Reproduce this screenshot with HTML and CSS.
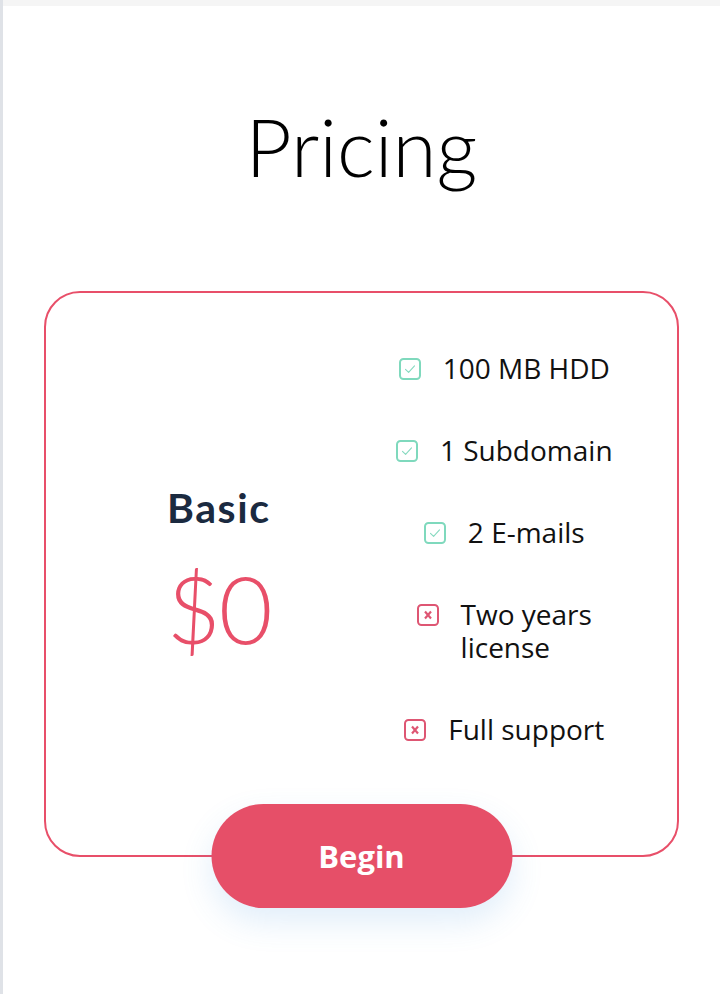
FILE: index.html
```html
<!DOCTYPE html>
<html lang="en">
<head>
<meta charset="utf-8">
<title>Pricing</title>
<link rel="stylesheet" href="styles.css">
</head>
<body>
<div class="topbar"></div>
<main class="pricing">
  <h1 class="title">Pricing</h1>
  <section class="card">
    <div class="plan">
      <h2 class="plan-name">Basic</h2>
      <div class="plan-price">$0</div>
    </div>
    <ul class="features">
      <li class="feature">
        <svg class="icon" viewBox="0 0 22 22" width="22" height="22"><rect class="box ok" x="1" y="1" width="20" height="20" rx="3.5"/><path class="tick" d="M6.5 11.3 L9.6 14.3 L15.5 7.8"/></svg>
        <span class="label">100 MB HDD</span>
      </li>
      <li class="feature">
        <svg class="icon" viewBox="0 0 22 22" width="22" height="22"><rect class="box ok" x="1" y="1" width="20" height="20" rx="3.5"/><path class="tick" d="M6.5 11.3 L9.6 14.3 L15.5 7.8"/></svg>
        <span class="label">1 Subdomain</span>
      </li>
      <li class="feature">
        <svg class="icon" viewBox="0 0 22 22" width="22" height="22"><rect class="box ok" x="1" y="1" width="20" height="20" rx="3.5"/><path class="tick" d="M6.5 11.3 L9.6 14.3 L15.5 7.8"/></svg>
        <span class="label">2 E-mails</span>
      </li>
      <li class="feature">
        <svg class="icon" viewBox="0 0 22 22" width="22" height="22"><rect class="box no" x="1" y="1" width="20" height="20" rx="3.5"/><path class="cross" d="M8 7.6 L14 14.4 M14 7.6 L8 14.4"/></svg>
        <span class="label">Two years<br>license</span>
      </li>
      <li class="feature">
        <svg class="icon" viewBox="0 0 22 22" width="22" height="22"><rect class="box no" x="1" y="1" width="20" height="20" rx="3.5"/><path class="cross" d="M8 7.6 L14 14.4 M14 7.6 L8 14.4"/></svg>
        <span class="label">Full support</span>
      </li>
    </ul>
    <button class="begin" type="button">Begin</button>
  </section>
</main>
</body>
</html>
```
FILE: styles.css
```css
html, body {
  margin: 0;
  padding: 0;
  background: #ffffff;
}

body {
  border-left: 3px solid #dfe2e7;
  min-height: 994px;
  box-sizing: border-box;
}

.topbar {
  height: 6px;
  background: #f5f5f5;
}

.pricing {
  text-align: center;
}

.title {
  margin: 92px 0 0;
  font-family: "Lato", sans-serif;
  font-weight: 300;
  font-size: 80px;
  line-height: 96px;
  color: #000;
}

.card {
  position: relative;
  margin: 97px 41px 0;
  border: 2px solid #e84f69;
  border-radius: 36px;
  padding: 59px 30px 109px;
  display: grid;
  grid-template-columns: 1fr 1fr;
  align-items: center;
}

.plan {
  padding-top: 42px;
  display: flex;
  flex-direction: column;
  align-items: center;
}

.plan-name {
  margin: 0;
  font-family: "Lato", sans-serif;
  font-weight: 700;
  font-size: 41px;
  line-height: 48px;
  letter-spacing: 1.6px;
  color: #1b2a40;
}

.plan-price {
  margin-top: 29px;
  font-family: "Lato", sans-serif;
  font-weight: 300;
  font-size: 93px;
  line-height: 95px;
  letter-spacing: -2px;
  color: #e84f69;
}

.features {
  list-style: none;
  margin: 0;
  padding: 0;
  display: flex;
  flex-direction: column;
  gap: 49px;
}

.feature {
  display: flex;
  justify-content: center;
  align-items: flex-start;
  gap: 22px;
  font-family: "Open Sans", sans-serif;
  font-size: 28px;
  line-height: 33px;
  color: #111;
  text-align: left;
}

.icon {
  flex: none;
  margin-top: 6px;
}

.box {
  fill: none;
  stroke-width: 2;
}

.box.ok {
  stroke: #7fd9bd;
}

.box.no {
  stroke: #de5673;
}

.tick {
  fill: none;
  stroke: #86dac0;
  stroke-width: 1.1;
  stroke-linecap: round;
  stroke-linejoin: round;
}

.cross {
  fill: none;
  stroke: #de5673;
  stroke-width: 2.2;
  stroke-linecap: butt;
}

.begin {
  position: absolute;
  left: 50%;
  bottom: -53px;
  transform: translateX(-50%);
  width: 301px;
  height: 104px;
  border: none;
  border-radius: 52px;
  background: #e64f68;
  color: #fff;
  font-family: "Open Sans", sans-serif;
  font-weight: 700;
  font-size: 31px;
  box-shadow: 0 14px 32px rgba(70, 150, 225, 0.16);
  cursor: pointer;
}
```
